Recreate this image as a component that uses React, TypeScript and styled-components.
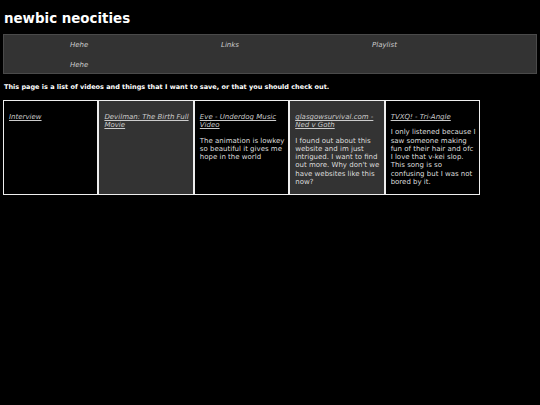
import React from "react";
import styled, { createGlobalStyle } from "styled-components";

const GlobalStyle = createGlobalStyle`
  body {
    margin: 3px;
    background: #000;
    color: #fff;
    font-family: "DejaVu Sans", Verdana, sans-serif;
  }
`;

const Title = styled.h1`
  font-size: 13.4px;
  margin: 7px 0 7px 1px;
  line-height: 17px;
`;

const Nav = styled.nav`
  background: #333;
  border: 1px solid #4a4a4a;
  height: 40px;
  box-sizing: border-box;
  display: grid;
  grid-template-columns: repeat(3, 151px);
  grid-auto-rows: 20px;
  align-items: center;
  padding-left: 66px;
`;

const NavLink = styled.a`
  color: #ccc;
  font-style: italic;
  font-size: 7px;
`;

const Intro = styled.p`
  font-size: 6.5px;
  line-height: 8px;
  font-weight: bold;
  margin: 9px 0 9px 1px;
`;

const Cards = styled.div`
  display: flex;
  width: 477px;
`;

const Card = styled.div<{ $dark?: boolean }>`
  flex: 1;
  min-width: 0;
  height: 95px;
  box-sizing: border-box;
  border: 1px solid #eee;
  background: ${(p) => (p.$dark ? "#333" : "#000")};
  padding: 12px 2px 5px 5px;
  font-size: 7px;
  line-height: 8.3px;
  color: #ddd;
  white-space: nowrap;
`;

const CardLink = styled.a`
  color: #ccc;
  font-style: italic;
  text-decoration: underline;
  display: block;
  margin-bottom: 7px;
`;

const CardText = styled.p`
  margin: 0;
`;

// line breaks kept as in the original layout
const items = [
  { title: ["Interview"], text: [] },
  { title: ["Devilman: The Birth Full", "Movie"], text: [] },
  {
    title: ["Eve - Underdog Music", "Video"],
    text: ["The animation is lowkey", "so beautiful it gives me", "hope in the world"],
  },
  {
    title: ["glasgowsurvival.com -", "Ned v Goth"],
    text: [
      "I found out about this",
      "website and im just",
      "intrigued. I want to find",
      "out more. Why don't we",
      "have websites like this",
      "now?",
    ],
  },
  {
    title: ["TVXQ! - Tri-Angle"],
    text: [
      "I only listened because I",
      "saw someone making",
      "fun of their hair and ofc",
      "I love that v-kei slop.",
      "This song is so",
      "confusing but I was not",
      "bored by it.",
    ],
  },
];

const Lines = ({ lines }: { lines: string[] }) => (
  <>
    {lines.map((l, i) => (
      <React.Fragment key={i}>
        {i > 0 && <br />}
        {l}
      </React.Fragment>
    ))}
  </>
);

const App = () => {
  return (
    <>
      <GlobalStyle />
      <Title>newbic neocities</Title>
      <Nav>
        <NavLink>Hehe</NavLink>
        <NavLink>Links</NavLink>
        <NavLink>Playlist</NavLink>
        <NavLink>Hehe</NavLink>
      </Nav>
      <Intro>
        This page is a list of videos and things that I want to save, or that
        you should check out.
      </Intro>
      <Cards>
        {items.map((item, i) => (
          <Card key={item.title[0]} $dark={i % 2 === 1}>
            <CardLink>
              <Lines lines={item.title} />
            </CardLink>
            {item.text.length > 0 && (
              <CardText>
                <Lines lines={item.text} />
              </CardText>
            )}
          </Card>
        ))}
      </Cards>
    </>
  );
};

export default App;
